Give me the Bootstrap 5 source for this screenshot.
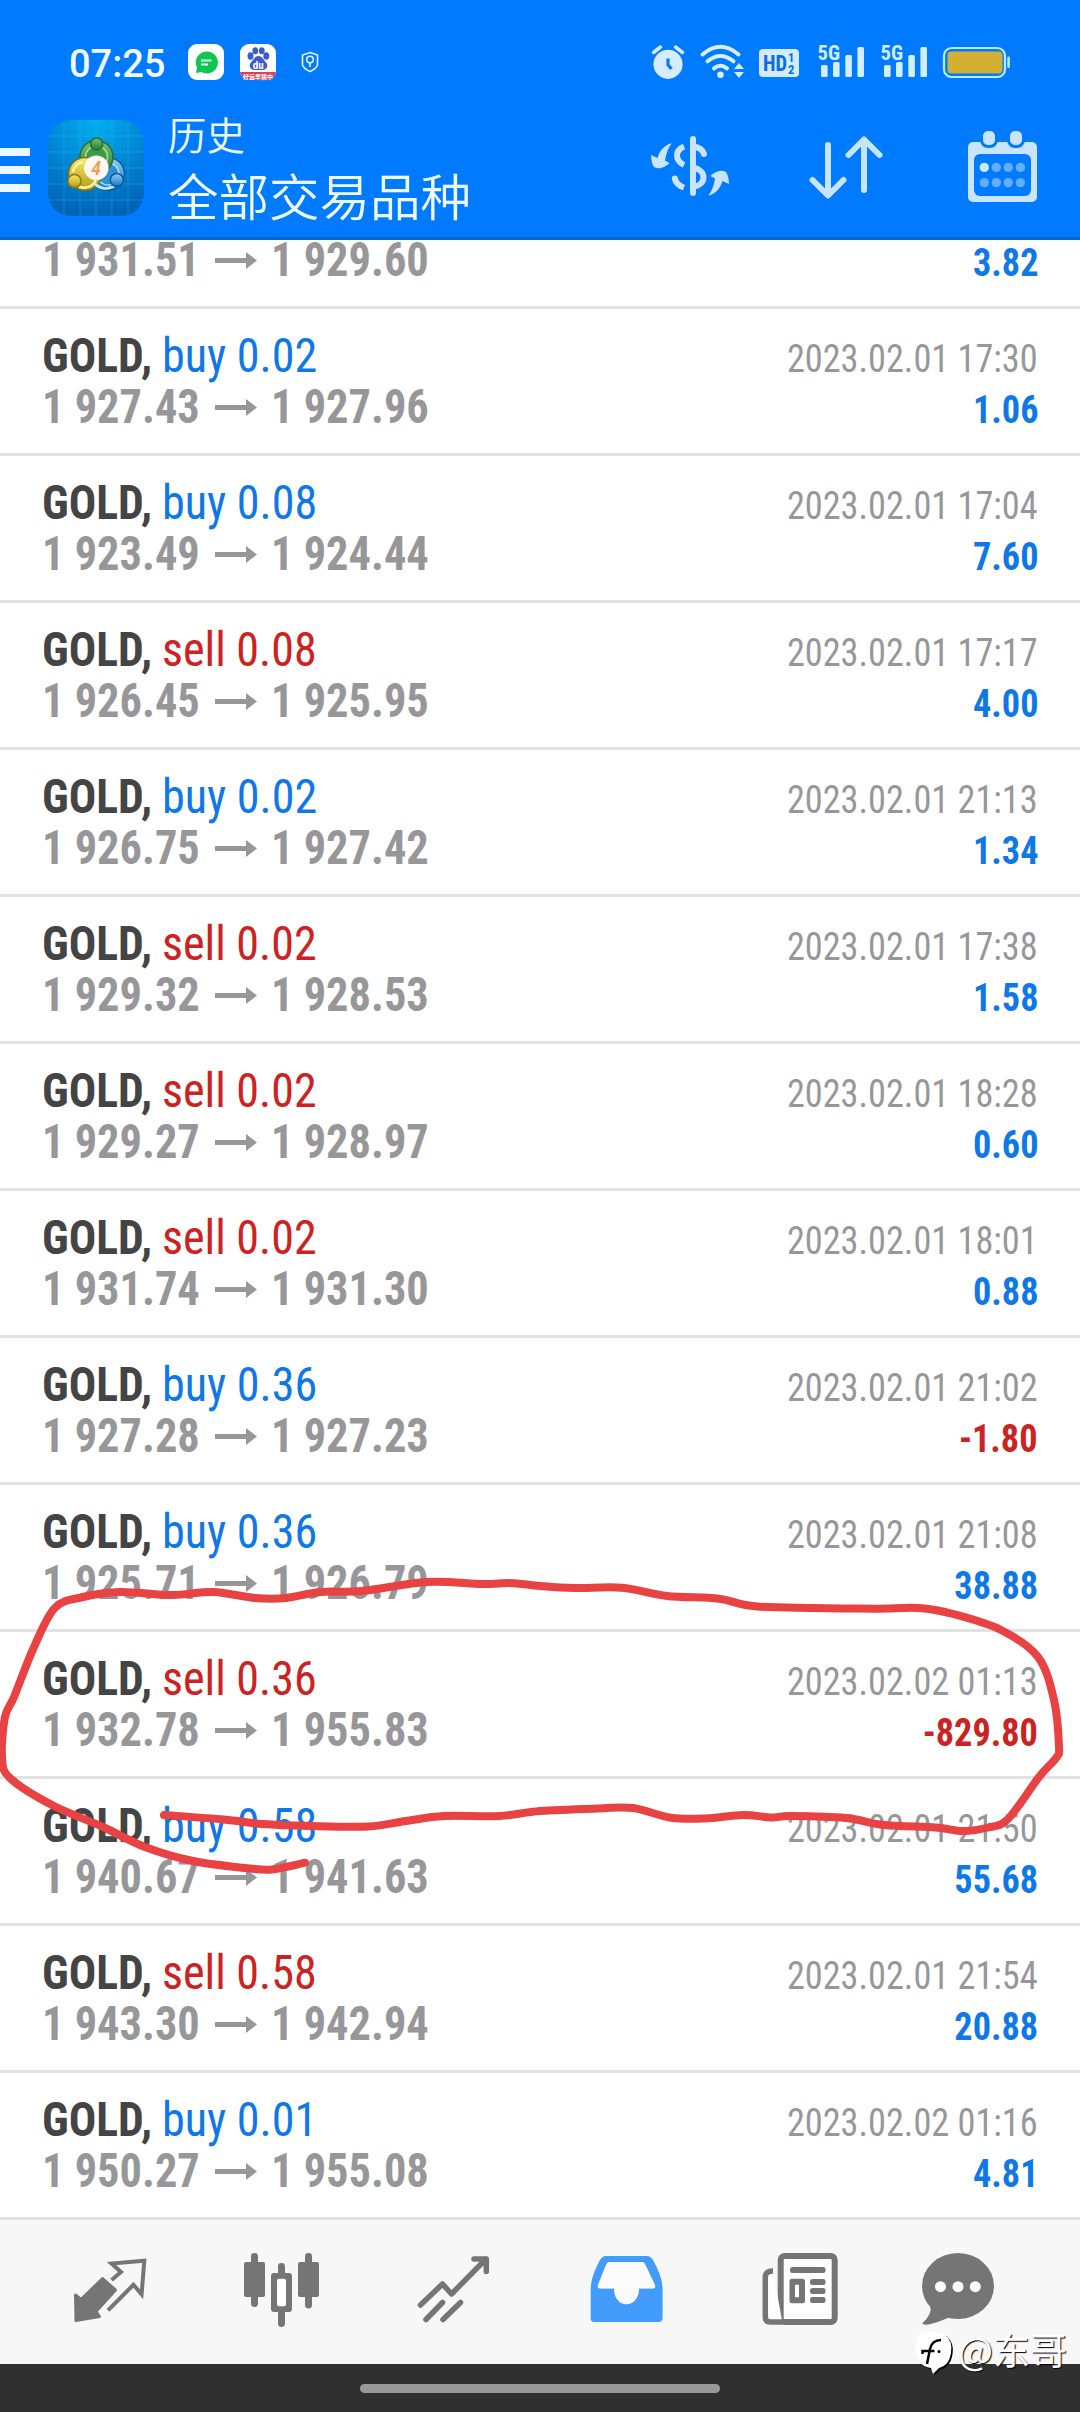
<!DOCTYPE html>
<html lang="zh-CN">
<head>
<meta charset="utf-8">
<meta name="viewport" content="width=device-width, initial-scale=1">
<title>历史</title>
<link href="https://cdn.jsdelivr.net/npm/bootstrap@5.3.0/dist/css/bootstrap.min.css" rel="stylesheet">
<style>
body{width:1080px;height:2412px;overflow:hidden;background:#fff;font-family:"Roboto Condensed",Roboto,"Noto Sans CJK SC",sans-serif;font-stretch:75%}
svg{display:block;flex:none;overflow:visible}
.top-area{height:240px;background:#007aff;box-shadow:inset 0 -3px #0069d6}
.status-row{height:124px;padding:0 69px}
.clock{font:500 38px/124px Roboto,sans-serif;color:#f2fbff;width:119px;padding-top:2px}
.app-row{height:116px;padding-right:42px}
.titles{margin:-10px 0 0 24px;color:#effaff;font-family:"Noto Sans CJK SC",sans-serif;font-weight:350}
.t-small{font-size:38.5px;line-height:39px}
.t-big{font-size:50.5px;line-height:82px}
.deals{height:1980px}
.deal{height:147px;flex:none;padding:21px 42px 0;border-bottom:3px solid #e2e2e2}
.line-a{height:51px;font-size:48px;line-height:51px;white-space:nowrap}
.sq{display:inline-block;transform-origin:0 50%}
.sym{font-weight:700;color:#444;width:119.5px;transform:scaleX(.95)}
.side{transform:scaleX(.96)}
.buy{color:#0f78e8}
.sell{color:#cc2222}
.price{font-weight:700;color:#979799;width:173px;transform:scaleX(.925)}
.arrow{width:42px;height:17px;margin-right:14px;align-self:flex-start;margin-top:18px}
.sqr{display:inline-block;transform-origin:100% 50%;font-size:39px;line-height:40px}
.when{color:#979799;transform:scaleX(.93)}
.gain{font-weight:700;transform:scaleX(.93)}
.tabs{height:144px;background:#f7f7f7;padding-left:71px;gap:92px}
.sysbar{height:48px;background:#303030}
.handle{width:360px;height:9px;border-radius:5px;background:#999}
.ink{left:0;top:1560px}
.wm{left:912px;top:2328px}
.wm-text{margin-left:4px;color:#fff;font:400 37px/42px "Noto Sans CJK SC",sans-serif;text-shadow:1px 1px 1px #000;white-space:nowrap}
</style>
<script src="https://cdn.jsdelivr.net/npm/bootstrap@5.3.0/dist/js/bootstrap.bundle.min.js"></script>
</head>
<body class="position-relative">
<header class="top-area">
  <div class="status-row d-flex">
    <div class="clock">07:25</div>
    <svg width="36" height="124" viewBox="188 0 36 124"><rect x="188" y="44" width="36" height="36" rx="9" fill="#fff"/><path d="M206 51.500a11 11 0 1 1-4.500 20.500l-5.500 1 1-5.500A11 11 0 0 1 206 51.500z" fill="#0fc74d"/><path d="M201 60.500h10.500M201 64.500h7" stroke="#dff" stroke-width="1.800"/></svg>
    <svg class="ms-3" width="36" height="124" viewBox="240 0 36 124"><defs><clipPath id="bd"><rect x="240" y="44" width="36" height="36" rx="9"/></clipPath></defs><g clip-path="url(#bd)"><path fill="#fff" d="M240 44h36v36h-36z"/><path fill="#e23b55" d="M240 72h36v8h-36z"/></g><g fill="#3b5bd0"><ellipse cx="250.500" cy="56" rx="3" ry="3.800"/><ellipse cx="255.300" cy="50.800" rx="2.900" ry="3.500"/><ellipse cx="261.800" cy="50.800" rx="2.900" ry="3.500"/><ellipse cx="266.300" cy="56" rx="3" ry="3.800"/><path d="M258.500 56c4 0 5 4 8 7 2 3 0 7-3.500 7h-9c-3.500 0-5.500-4-3.500-7 3-3 4-7 8-7z"/></g><text x="258.300" y="68.500" font-family="Roboto" font-size="11" font-weight="700" fill="#fff" text-anchor="middle">du</text><text x="258" y="78.500" font-family="Noto Sans CJK SC" font-size="6" font-weight="700" fill="#fff" text-anchor="middle">好运早猜中</text></svg>
    <svg width="16" height="124" viewBox="302 0 16 124" style="margin-left:26px" fill="none" stroke="#e6f6ff" stroke-width="1.600"><path d="M310 52.500l7.500 2.500v10q-1.500 4-7.500 6.500-6-2.500-7.500-6.500V55z"/><circle cx="310" cy="59.500" r="3.300"/><path d="M310 63v4"/></svg>
    <div class="d-flex ms-auto">
      <svg width="36" height="124" viewBox="650 0 36 124"><circle cx="668" cy="64.300" r="14.600" fill="#d5ebff"/><path d="M653.500 52.500l7-5.500M675.500 47l7 5.500" stroke="#d5ebff" stroke-width="3.500" stroke-linecap="round"/><path d="M668 58.500v6.500l3.500 3.800" fill="none" stroke="#007aff" stroke-width="3.200"/></svg>
      <svg width="46" height="124" viewBox="699 0 46 124" style="margin-left:13px" fill="none" stroke="#d5f0ff" stroke-width="4" stroke-linecap="round"><path d="M702.500 54.500q18-15.500 36 0M707.500 61.300q13-10.500 26 0M714 68.300q6.500-5 13 0"/><g fill="#d5f0ff" stroke="none"><circle cx="720.500" cy="74.800" r="3.300"/><path d="M734 69h10l-5-6zM734 72h10l-5 6z"/></g></svg>
      <svg width="40" height="124" viewBox="759 0 40 124" style="margin-left:14px"><rect x="759" y="49" width="40" height="28" rx="4" fill="#d3eaff"/><g fill="#0a6fdc" font-family="Roboto Condensed,Roboto" font-weight="700"><text x="763" y="71" font-size="22" textLength="24" lengthAdjust="spacingAndGlyphs">HD</text><text x="788" y="62" font-size="12.500">1</text><text x="788" y="73.500" font-size="12.500">2</text></g></svg>
      <svg width="50" height="124" viewBox="816 0 50 124" style="margin-left:17px"><g id="sig" fill="#d3eeff"><text x="817.500" y="60" font-family="Roboto Condensed,Roboto" font-size="20.500" font-weight="700" textLength="22.500" lengthAdjust="spacingAndGlyphs">5G</text><rect x="821" y="65" width="6.600" height="12" rx="1.500"/><rect x="833" y="62" width="6.600" height="15" rx="1.500"/><rect x="845.300" y="55" width="6.600" height="22" rx="1.500"/><rect x="857.400" y="47" width="6.600" height="30" rx="1.500"/></g></svg>
      <svg width="50" height="124" viewBox="816 0 50 124" style="margin-left:13px"><use href="#sig"/></svg>
      <svg width="70" height="124" viewBox="941 0 70 124" style="margin-left:12px"><rect x="944" y="48" width="61" height="29" rx="7.500" fill="none" stroke="#b9ecff" stroke-width="2.200"/><rect x="947.500" y="51.500" width="55" height="22" rx="4" fill="#d3b033"/><rect x="1007.300" y="56.500" width="2.600" height="11.500" rx="1.300" fill="#b9ecff"/></svg>
    </div>
  </div>
  <div class="app-row d-flex">
    <svg width="30" height="116" viewBox="0 124 30 116" fill="#eaf8ff"><path d="M0 148h30v8H0zM0 166h30v8H0zM0 184h30v8H0z"/></svg>
    <svg width="96" height="116" viewBox="48 124 96 116" style="margin-left:18px">
      <defs>
        <radialGradient id="bg" cx=".5" cy="0" r="1"><stop offset="0" stop-color="#00b0f0"/><stop offset=".5" stop-color="#0088d4"/><stop offset="1" stop-color="#0063b6"/></radialGradient>
        <linearGradient id="gr" x2="0" y2="1"><stop offset="0" stop-color="#7fc47a"/><stop offset="1" stop-color="#1f7d2c"/></linearGradient>
        <linearGradient id="ye" x2="0" y2="1"><stop offset="0" stop-color="#fbe96a"/><stop offset="1" stop-color="#b59a12"/></linearGradient>
        <linearGradient id="bl" x2="0" y2="1"><stop offset="0" stop-color="#8fd3fa"/><stop offset="1" stop-color="#1173c4"/></linearGradient>
      </defs>
      <rect x="48" y="120" width="96" height="96" rx="23" fill="url(#bg)"/>
      <path d="M64 121v94M80 120v96M96 120v96M112 120v96M128 121v94M48 136h96M48 152h96M48 168h96M48 184h96M48 200h96" stroke="#3cc0f5" stroke-opacity=".3" stroke-width="1"/>
      <g stroke-width="1.500">
        <circle cx="108" cy="174" r="16.500" fill="url(#bl)" stroke="#0c5b9a"/><circle cx="108" cy="174" r="11" fill="#2c8fd8" stroke="#a9defa"/>
        <circle cx="96.500" cy="157" r="16.500" fill="url(#gr)" stroke="#2b6b32"/><circle cx="96.500" cy="157" r="11" fill="#3f9a45" stroke="#a9dca0"/>
        <circle cx="85" cy="174" r="16.500" fill="url(#ye)" stroke="#77701c"/><path d="M73 172a12 12 0 0 1 10-10M79 187q12 3 17-7" fill="none" stroke="#fff7a8" stroke-width="2.500"/>
        <path d="M94 183q10 10 22 2" fill="none" stroke="#c5ebff" stroke-width="2.500"/>
        <circle cx="96.700" cy="144" r="6" fill="url(#gr)" stroke="#2b6b32"/><circle cx="74.500" cy="181" r="6.500" fill="url(#ye)" stroke="#8b7d1a"/><circle cx="116.800" cy="180" r="6.500" fill="url(#bl)" stroke="#0c5b9a"/>
      </g>
      <circle cx="96.300" cy="167.700" r="12.300" fill="#fdf8f6"/>
      <text x="96" y="175" font-family="Roboto" font-size="20" font-weight="500" font-style="italic" fill="#f29a4d" text-anchor="middle">4</text>
    </svg>
    <div class="titles"><div class="t-small">历史</div><div class="t-big">全部交易品种</div></div>
    <div class="d-flex ms-auto">
      <svg width="84" height="116" viewBox="648 124 84 116" fill="none" stroke="#c9e4ff" stroke-width="6">
        <path d="M693 139v54" stroke-linecap="round"/><path d="M684 146.500q-7 3-7 9t7 9.500"/><path d="M693 146.500q9 1 11 7.500" stroke-linecap="round"/><path d="M693 167.500c14 3 14 17 0 19.500"/><path d="M674.800 178.500q1.500 6.500 9.200 9" /><circle cx="674.800" cy="178.500" r="3" fill="#c9e4ff" stroke="none"/>
        <g fill="#c9e4ff" stroke="none"><path id="sw" d="M671.700 143.300C664 145 659 152 657.500 158L651 155Q651.500 164 654 167Q657 169 661 168Q667 166 669.500 163L665 160.500C666 154 668 148 671.700 143.300Z"/><use href="#sw" transform="rotate(180 690 169.500)"/></g>
      </svg>
      <svg width="80" height="116" viewBox="806 124 80 116" style="margin-left:74px" fill="none" stroke="#c9e4ff" stroke-width="6" stroke-linecap="round" stroke-linejoin="round"><path d="M828 145v50M812.500 180l15.500 15.500 15.500-15.500M864 190v-50M848.500 155l15.500-15.500 15.500 15.500"/></svg>
      <svg width="72" height="116" viewBox="966 124 72 116" style="margin-left:80px">
        <rect x="968" y="142" width="69" height="60" rx="5" fill="#c9e4ff"/><rect x="974" y="154" width="57" height="42" rx="6" fill="#007aff"/>
        <g fill="#c9e4ff" stroke="#007aff" stroke-width="3"><rect x="981.500" y="129.500" width="15" height="17" rx="6.500"/><rect x="1008.500" y="129.500" width="15" height="17" rx="6.500"/></g>
        <circle cx="984.300" cy="167.400" r="4.700" fill="#c9e9ff"/><g fill="#62aeff"><circle cx="996.300" cy="167.400" r="4.700"/><circle cx="1008.300" cy="167.400" r="4.700"/><circle cx="1020.400" cy="167.400" r="4.700"/><circle cx="984.300" cy="182.600" r="4.700"/><circle cx="996.300" cy="182.600" r="4.700"/><circle cx="1008.300" cy="182.600" r="4.700"/><circle cx="1020.400" cy="182.600" r="4.700"/></g>
      </svg>
    </div>
  </div>
</header>
<main class="deals d-flex flex-column justify-content-end overflow-hidden" id="deals"></main>
<nav class="tabs d-flex">
  <svg width="80" height="144" viewBox="71 2220 80 144"><path d="M102.600 2278.500L115.500 2290 96 2311.500 99.500 2316.500 76 2320.500 75.500 2295 81 2299.500z" fill="#757575" stroke="#757575" stroke-width="3" stroke-linejoin="round"/><path d="M111.600 2280l9.400-8-9.500-8.500 32.800-2.700-2.700 33.500-8.200-9.500-25.400 25.500" fill="none" stroke="#757575" stroke-width="4"/></svg>
  <svg width="80" height="144" viewBox="243 2220 80 144" fill="#757575"><rect x="244" y="2262" width="21" height="35" rx="2"/><rect x="251" y="2253" width="7" height="54" rx="3.400"/><rect x="278" y="2263" width="7" height="64" rx="3.400"/><rect x="271" y="2273" width="21" height="39" rx="3"/><rect x="277" y="2278.700" width="9" height="27.500" rx="2" fill="#fff"/><rect x="298" y="2262" width="21" height="35" rx="2"/><rect x="305" y="2253" width="7" height="55.500" rx="3.400"/></svg>
  <svg width="80" height="144" viewBox="415 2220 80 144" fill="none" stroke="#757575" stroke-width="5.500" stroke-linecap="round" stroke-linejoin="round"><path d="M420.500 2305l22-21 9 10 34.500-35M474 2259h12.300v12.500"/><path d="M426 2319.500l16.500-17M443 2319.500l17.500-17"/></svg>
  <svg width="80" height="144" viewBox="587 2220 80 144"><path fill-rule="evenodd" fill="#419cfc" d="M590.700 2318v-28C590.700 2277 597 2266 600 2260q2.500-4 6-4h41q3.500 0 6 4C658 2269 662.600 2279 662.600 2290v28q0 4-4 4h-64q-4 0-4-4zM610 2262h32q2 0 3 2l10 21q1 3.500-2 3.500h-14c0 21-25 21-25 0h-14q-3 0-2-3.500l8-20q1-3 4-3z"/><path fill="#fff" fill-opacity=".5" d="M610 2262h32q2 0 3 2l10 21q1 3.500-2 3.500h-14c0 21-25 21-25 0h-14q-3 0-2-3.500l8-20q1-3 4-3z"/></svg>
  <svg width="80" height="144" viewBox="759 2220 80 144"><rect x="780.700" y="2256" width="54" height="66" rx="4" fill="#fff" stroke="#757575" stroke-width="6"/><path d="M773 2271q-7.700 0-7.700 6v40q0 5 5 5h12" fill="#fff" stroke="#757575" stroke-width="5.500"/><g fill="#757575"><rect x="790" y="2267" width="35.500" height="6" rx="2.500"/><path fill-rule="evenodd" d="M792 2278.700h10.500q2.500 0 2.500 2.500v19.500q0 2.500-2.500 2.500H792q-2.500 0-2.500-2.500v-19.500q0-2.500 2.500-2.500zm3 6v12.500h4v-12.500z"/><rect x="810" y="2279" width="15.500" height="6" rx="2.500"/><rect x="810" y="2288" width="15.500" height="6" rx="2.500"/><rect x="810" y="2297" width="15.500" height="6" rx="2.500"/></g></svg>
  <svg width="80" height="144" viewBox="931 2220 80 144"><g fill="#757575"><ellipse cx="958" cy="2286" rx="36" ry="33"/><path d="M930 2305q3 9-8 18.500 4 4 27-6z"/></g><g fill="#fff"><circle cx="940.500" cy="2286.700" r="5.500"/><circle cx="958" cy="2286.700" r="5.500"/><circle cx="975.300" cy="2286.700" r="5.500"/></g></svg>
</nav>
<footer class="sysbar d-flex justify-content-center align-items-center"><div class="handle"></div></footer>

<svg class="ink position-absolute" width="1080" height="340" viewBox="0 1560 1080 340"><path id="ink" fill="none" stroke="#e84242" stroke-width="8" stroke-linecap="round" stroke-linejoin="round"/></svg>

<div class="wm position-absolute d-flex">
  <svg width="42" height="48" viewBox="912 2328 42 48"><path d="M921 2333q16-3 24 2 8 6 6 18-2 13-12 15l-6 6-2-6q-8-1-11-6-6-8-4-18 1-8 5-11z" fill="#000" transform="translate(1.500 1.500)"/><path d="M921 2333q16-3 24 2 8 6 6 18-2 13-12 15l-6 6-2-6q-8-1-11-6-6-8-4-18 1-8 5-11z" fill="#fff"/><path d="M927 2364l3-15q2-9 11-9M922.500 2354v-3h12" fill="none" stroke="#000" stroke-width="2.500"/><circle cx="939" cy="2351.500" r="1.500"/></svg>
  <div class="wm-text">@东哥</div>
</div>

<script>
// side, volume, open, close, time, profit
const deals = [
  ['sell','0.02','1 931.51','1 929.60','2023.02.01 17:28','3.82'],
  ['buy','0.02','1 927.43','1 927.96','2023.02.01 17:30','1.06'],
  ['buy','0.08','1 923.49','1 924.44','2023.02.01 17:04','7.60'],
  ['sell','0.08','1 926.45','1 925.95','2023.02.01 17:17','4.00'],
  ['buy','0.02','1 926.75','1 927.42','2023.02.01 21:13','1.34'],
  ['sell','0.02','1 929.32','1 928.53','2023.02.01 17:38','1.58'],
  ['sell','0.02','1 929.27','1 928.97','2023.02.01 18:28','0.60'],
  ['sell','0.02','1 931.74','1 931.30','2023.02.01 18:01','0.88'],
  ['buy','0.36','1 927.28','1 927.23','2023.02.01 21:02','-1.80'],
  ['buy','0.36','1 925.71','1 926.79','2023.02.01 21:08','38.88'],
  ['sell','0.36','1 932.78','1 955.83','2023.02.02 01:13','-829.80'],
  ['buy','0.58','1 940.67','1 941.63','2023.02.01 21:50','55.68'],
  ['sell','0.58','1 943.30','1 942.94','2023.02.01 21:54','20.88'],
  ['buy','0.01','1 950.27','1 955.08','2023.02.02 01:16','4.81']
];
document.getElementById('deals').innerHTML = deals.map(([side, vol, open, close, time, gain], i) => `
  <div class="deal">
    <div class="line-a d-flex align-items-baseline${i ? '' : ' invisible'}">${i ? `<span class="sq sym">GOLD,</span><span class="sq side ${side}">${side} ${vol}</span><span class="sqr when ms-auto">${time}</span>` : ''}</div>
    <div class="line-a d-flex align-items-baseline"><span class="sq price">${open}</span><svg class="arrow" viewBox="0 0 42 17"><path d="M0 6h31V0l11 8.500L31 17v-6H0z" fill="#979799"/></svg><span class="sq price">${close}</span><span class="sqr gain ms-auto ${gain[0] === '-' ? 'sell' : 'buy'}">${gain}</span></div>
  </div>`).join('');

// hand-drawn loop, smoothed through its points
const p = [[164,1815],[224,1819.5],[262,1824],[310,1826],[368,1826.5],[406,1821],[444,1816],[499,1816],[540,1811],[598,1808.5],[633,1808],[671,1817.7],[705,1818.5],[743,1815],[771,1817.5],[791,1816],[846,1818],[884,1825],[936,1827.5],[963,1831],[988,1827.5],[1008,1819],[1039,1777],[1056,1758],[1059,1747],[1054,1700],[1038,1657],[1001,1630],[953,1614],[919,1608],[874,1608.7],[760,1606.7],[719,1598.7],[667,1596],[622,1587.7],[574,1588],[540,1586],[510,1583],[482,1584],[427,1582],[362,1591],[320,1592],[286,1598],[255,1598],[213,1592],[172,1595],[120,1592],[83,1597],[55,1607.7],[34,1647],[14,1697],[5,1717],[2,1757],[10,1778],[52,1805],[103,1827],[145,1847],[193,1861],[255,1869],[275,1869],[305,1862.7]];
let d = 'M' + p[0];
for (let i = 0; i < p.length - 1; i++) {
  const a = p[i - 1] || p[i], b = p[i], c = p[i + 1], e = p[i + 2] || c;
  d += `C${b[0] + (c[0] - a[0]) / 6} ${b[1] + (c[1] - a[1]) / 6} ${c[0] - (e[0] - b[0]) / 6} ${c[1] - (e[1] - b[1]) / 6} ${c[0]} ${c[1]}`;
}
document.getElementById('ink').setAttribute('d', d);
</script>
</body>
</html>
